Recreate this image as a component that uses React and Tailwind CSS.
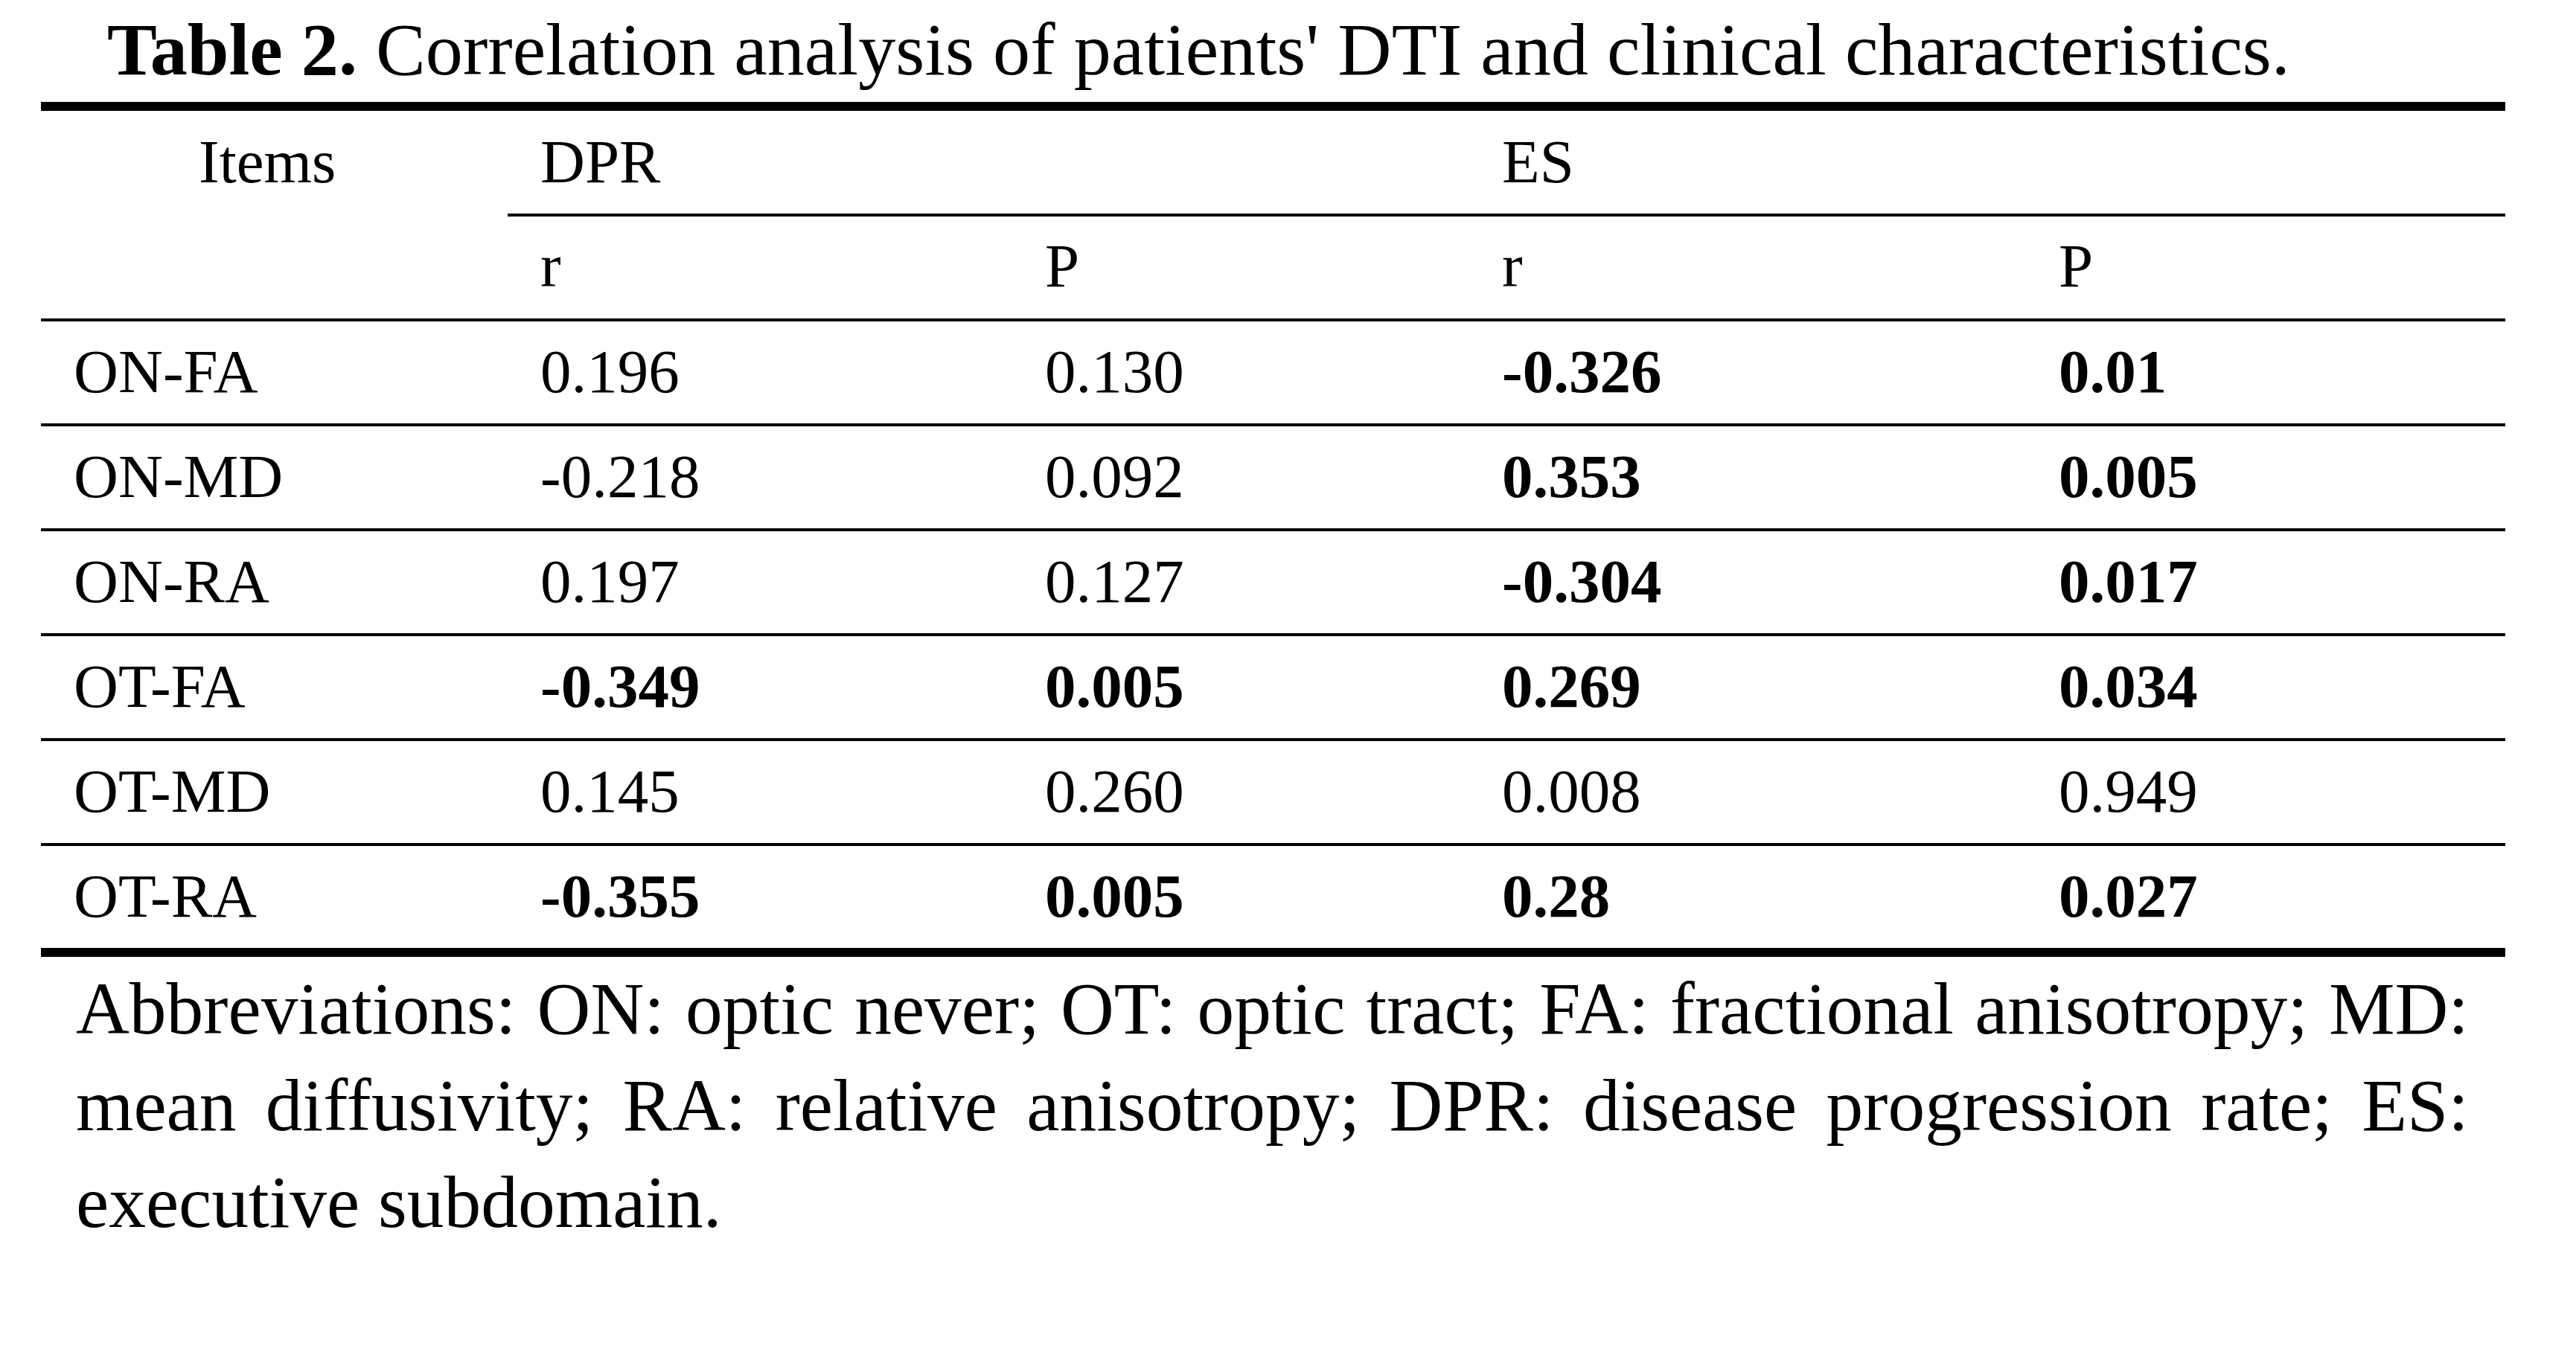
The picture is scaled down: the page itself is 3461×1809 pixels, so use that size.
import React from "react";

const rows = [
  { item: "ON-FA", v: [["0.196", false], ["0.130", false], ["-0.326", true], ["0.01", true]] },
  { item: "ON-MD", v: [["-0.218", false], ["0.092", false], ["0.353", true], ["0.005", true]] },
  { item: "ON-RA", v: [["0.197", false], ["0.127", false], ["-0.304", true], ["0.017", true]] },
  { item: "OT-FA", v: [["-0.349", true], ["0.005", true], ["0.269", true], ["0.034", true]] },
  { item: "OT-MD", v: [["0.145", false], ["0.260", false], ["0.008", false], ["0.949", false]] },
  { item: "OT-RA", v: [["-0.355", true], ["0.005", true], ["0.28", true], ["0.027", true]] },
];

const widths = ["w-[678px]", "w-[614px]", "w-[748px]", "w-[644px]"];

export default function App() {
  return (
    <div className="w-[3461px] h-[1809px] bg-white text-black overflow-hidden font-['Liberation_Serif',serif]">
      <div className="pt-[12px] pl-[144px] text-[100.2px] leading-[110px] whitespace-nowrap">
        <span className="font-bold">Table 2.</span> Correlation analysis of patients' DTI and clinical characteristics.
      </div>

      <div className="mt-[15px] ml-[55px] w-[3311px] border-t-[12px] border-b-[12px] border-black text-[83px]">
        <div className="flex">
          <div className="w-[627px] shrink-0">
            <div className="h-[138px] leading-[136px] pl-[212px]">Items</div>
          </div>
          <div className="flex-1 flex flex-col">
            <div className="flex h-[142px] border-b-4 border-black">
              <div className="w-[1292px] pl-[44px] leading-[136px]">DPR</div>
              <div className="flex-1 pl-[44px] leading-[136px]">ES</div>
            </div>
            <div className="flex h-[137px]">
              <div className="w-[678px] pl-[44px] leading-[132px]">r</div>
              <div className="w-[614px] pl-[44px] leading-[132px]">P</div>
              <div className="w-[748px] pl-[44px] leading-[132px]">r</div>
              <div className="w-[644px] pl-[44px] leading-[132px]">P</div>
            </div>
          </div>
        </div>
        {rows.map((r) => (
          <div key={r.item} className="flex h-[141px] border-t-4 border-black">
            <div className="w-[627px] pl-[44px] leading-[134px]">{r.item}</div>
            {r.v.map(([val, bold], i) => (
              <div
                key={i}
                className={`${widths[i]} pl-[44px] leading-[134px] ${bold ? "font-bold" : ""}`}
              >
                {val}
              </div>
            ))}
          </div>
        ))}
      </div>

      <p className="mt-[5px] ml-[102px] w-[3215px] text-[99.5px] leading-[130px] text-justify">
        Abbreviations: ON: optic never; OT: optic tract; FA: fractional anisotropy; MD: mean diffusivity; RA: relative anisotropy; DPR: disease progression rate; ES: executive subdomain.
      </p>
    </div>
  );
}
